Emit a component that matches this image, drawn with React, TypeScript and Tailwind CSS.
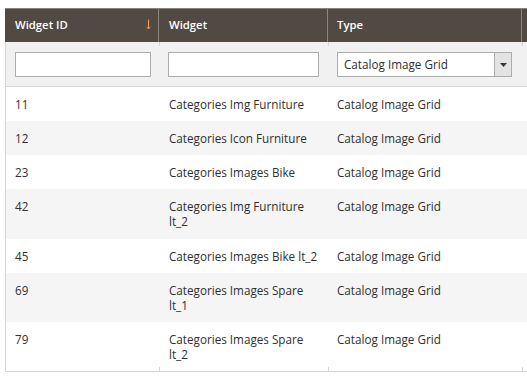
import React from "react";

const rows: { id: string; name: string; type: string }[] = [
  { id: "11", name: "Categories Img Furniture", type: "Catalog Image Grid" },
  { id: "12", name: "Categories Icon Furniture", type: "Catalog Image Grid" },
  { id: "23", name: "Categories Images Bike", type: "Catalog Image Grid" },
  { id: "42", name: "Categories Img Furniture lt_2", type: "Catalog Image Grid" },
  { id: "45", name: "Categories Images Bike lt_2", type: "Catalog Image Grid" },
  { id: "69", name: "Categories Images Spare lt_1", type: "Catalog Image Grid" },
  { id: "79", name: "Categories Images Spare lt_2", type: "Catalog Image Grid" },
];

function Tick({ top }: { top: boolean }) {
  return (
    <span
      className={
        "absolute right-[-1px] w-px h-[4px] bg-[#d6d6d6] " + (top ? "top-0" : "bottom-0")
      }
    />
  );
}

export default function App() {
  return (
    <div
      className="w-[527px] h-[379px] overflow-hidden bg-white pt-[8px] pl-[5px]"
      style={{ fontFamily: '"Open Sans", "Noto Sans", sans-serif' }}
    >
      <div className="w-[640px]">
        {/* Header */}
        <div className="flex h-[34px] bg-[#514943] border-t border-[#8a837f] text-white text-[11.3px] font-semibold">
          <div className="w-[154px] border-r border-[#8a837f] flex items-center justify-between pl-[10px] pr-[6px]">
            <span>Widget ID</span>
            <svg width="7" height="11" viewBox="0 0 7 11" className="mt-[-3px]">
              <path d="M3.5 0.5 V10" stroke="#ef9a3c" strokeWidth="1.1" fill="none" />
              <path d="M1.6 7.8 L3.5 10 L5.4 7.8" stroke="#ef9a3c" strokeWidth="1" fill="none" />
            </svg>
          </div>
          <div className="w-[169px] border-r border-[#8a837f] flex items-center pl-[10px]">Widget</div>
          <div className="w-[194px] border-r border-[#8a837f] flex items-center pl-[9px]">Type</div>
          <div className="flex-1" />
        </div>
        {/* Filters */}
        <div className="flex h-[45px] bg-[#f1f1f1] border-l border-b border-[#d6d6d6]">
          <div className="relative w-[153px] pl-[9px] pr-[8px] pt-[10px]">
            <input className="block w-full h-[25px] bg-white border border-[#adadad] outline-none" />
            <Tick top />
          </div>
          <div className="relative w-[169px] pl-[9px] pr-[9px] pt-[10px]">
            <input className="block w-full h-[25px] bg-white border border-[#adadad] outline-none" />
            <Tick top />
          </div>
          <div className="relative w-[194px] pl-[9px] pr-[10px] pt-[10px]">
            <div className="flex h-[25px] bg-white border border-[#adadad] text-[11.7px] text-[#303030]">
              <div className="flex-1 flex items-center pl-[6px]">Catalog Image Grid</div>
              <div className="w-[17px] bg-[#e3e3e3] border-l border-[#adadad] flex items-center justify-center">
                <svg width="7" height="4" viewBox="0 0 7 4">
                  <path d="M0 0 H7 L3.5 4 Z" fill="#41362f" />
                </svg>
              </div>
            </div>
            <Tick top />
          </div>
          <div className="flex-1" />
        </div>
        {/* Body */}
        <div className="border-l border-b border-[#d6d6d6] text-[11.7px] leading-[15px] text-[#303030]">
          {rows.map((r, i) => {
            const last = i === rows.length - 1;
            return (
              <div
                key={r.id}
                className={"flex " + (i % 2 === 1 ? "bg-[#f5f5f5]" : "bg-white")}
              >
                <div className="relative w-[153px] pl-[9px] pt-[10px] pb-[9.15px]">
                  {r.id}
                  {last && <Tick top={false} />}
                </div>
                <div className="relative w-[169px] pl-[10px] pr-[8px] pt-[10px] pb-[9.15px]">
                  {r.name}
                  {last && <Tick top={false} />}
                </div>
                <div className="relative w-[194px] pl-[9px] pt-[10px] pb-[9.15px]">
                  {r.type}
                  {last && <Tick top={false} />}
                </div>
                <div className="flex-1" />
              </div>
            );
          })}
        </div>
      </div>
    </div>
  );
}
